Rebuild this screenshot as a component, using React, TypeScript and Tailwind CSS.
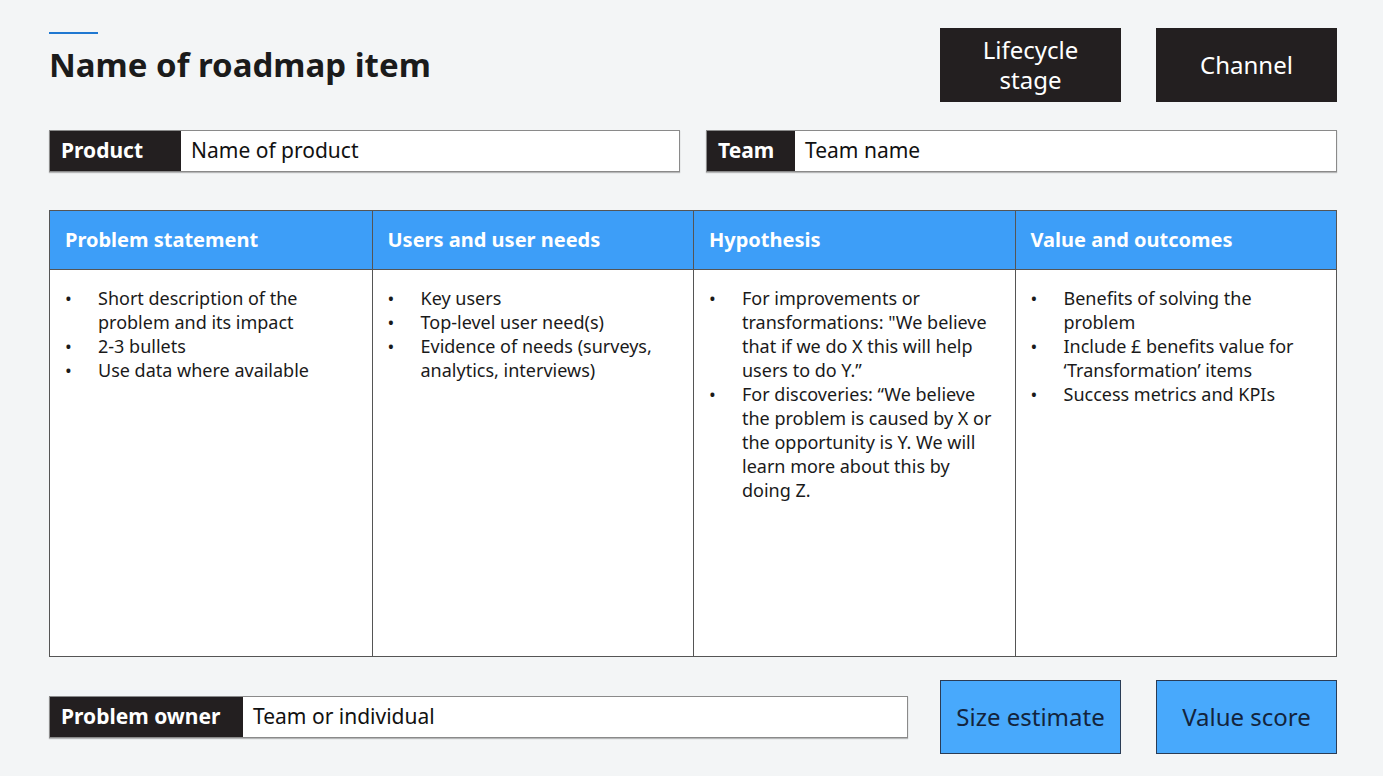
const columns = [
  {
    title: 'Problem statement',
    items: ['Short description of the problem and its impact', '2-3 bullets', 'Use data where available'],
  },
  {
    title: 'Users and user needs',
    items: ['Key users', 'Top-level user need(s)', 'Evidence of needs (surveys, analytics, interviews)'],
  },
  {
    title: 'Hypothesis',
    items: [
      'For improvements or transformations: "We believe that if we do X this will help users to do Y.”',
      'For discoveries: “We believe the problem is caused by X or the opportunity is Y. We will learn more about this by doing Z.',
    ],
  },
  {
    title: 'Value and outcomes',
    items: ['Benefits of solving the problem', 'Include £ benefits value for ‘Transformation’ items', 'Success metrics and KPIs'],
  },
];

function Field({ label, value, labelW }: { label: string; value: string; labelW: string }) {
  return (
    <div className="flex h-[42px] border border-[#8a8a8a] bg-white shadow-[0_1px_1px_rgba(0,0,0,0.25)]">
      <div className={`${labelW} flex items-center bg-[#231f20] px-[11px] text-[21px] font-bold text-white`}>{label}</div>
      <div className="flex items-center px-[10px] text-[21px] text-[#111]">{value}</div>
    </div>
  );
}

export default function App() {
  return (
    <div className="h-[776px] w-[1383px] bg-[#f3f5f6] pl-[49px] pr-[46px] pt-[28px] font-['Liberation_Sans',Arial,sans-serif] text-[#111]">
      <div className="flex items-start justify-between">
        <div className="pt-[4px]">
          <div className="h-[2px] w-[49px] bg-[#1f78d1]" />
          <h1 className="mt-[12px] text-[33px] font-bold leading-[38px] text-[#1b1b1b]">Name of roadmap item</h1>
        </div>
        <div className="flex gap-[35px]">
          <div className="flex h-[74px] w-[181px] items-center justify-center bg-[#231f20] text-center text-[24px] leading-[30px] text-white">
            Lifecycle
            <br />
            stage
          </div>
          <div className="flex h-[74px] w-[181px] items-center justify-center bg-[#231f20] text-[24px] text-white">Channel</div>
        </div>
      </div>

      <div className="mt-[28px] grid grid-cols-[631px_631px] justify-between">
        <Field label="Product" value="Name of product" labelW="w-[131px]" />
        <Field label="Team" value="Team name" labelW="w-[88px]" />
      </div>

      <div className="mt-[38px] grid h-[447px] grid-cols-4 grid-rows-[59px_1fr] border border-[#555] bg-white">
        {columns.map((c, i) => (
          <div
            key={c.title}
            className={`flex items-center border-b border-[#555] bg-[#3d9ef8] px-[15px] text-[20px] font-bold text-white ${i > 0 ? 'border-l' : ''}`}
          >
            {c.title}
          </div>
        ))}
        {columns.map((c, i) => (
          <div key={c.title + 'b'} className={`border-[#555] pl-[15px] pr-[12px] pt-[16px] ${i > 0 ? 'border-l' : ''}`}>
            <ul className="text-[18px] leading-[24px] text-[#1a1a1a]">
              {c.items.map((it) => (
                <li key={it} className="flex">
                  <span className="w-[33px] shrink-0">•</span>
                  <span>{it}</span>
                </li>
              ))}
            </ul>
          </div>
        ))}
      </div>

      <div className="mt-[23px] flex items-center justify-between">
        <div className="w-[859px]">
          <Field label="Problem owner" value="Team or individual" labelW="w-[193px]" />
        </div>
        <div className="flex gap-[35px]">
          <div className="flex h-[74px] w-[181px] items-center justify-center border border-[#2a3c55] bg-[#48a9fc] text-[24px] text-[#13243d]">
            Size estimate
          </div>
          <div className="flex h-[74px] w-[181px] items-center justify-center border border-[#2a3c55] bg-[#48a9fc] text-[24px] text-[#13243d]">
            Value score
          </div>
        </div>
      </div>
    </div>
  );
}
